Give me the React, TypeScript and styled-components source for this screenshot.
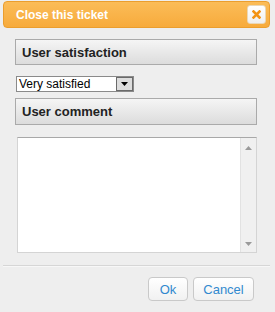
import React from "react";
import styled, { createGlobalStyle } from "styled-components";

const GlobalStyle = createGlobalStyle`
  html, body { margin: 0; padding: 0; background: #eeeeee; }
  * { box-sizing: border-box; }
`;

const Dialog = styled.div`
  width: 275px;
  height: 312px;
  background: #eeeeee;
  padding: 1px 5px 0 3px;
  font-family: "Liberation Sans", Arial, sans-serif;
  display: flex;
  flex-direction: column;
`;

const TitleBar = styled.div`
  height: 27px;
  border: 1px solid #eb9e2e;
  border-radius: 4px;
  background: linear-gradient(#fbbc58, #f7ab3c);
  display: flex;
  align-items: center;
  justify-content: space-between;
  padding: 0 3px 0 12px;
`;

const Title = styled.span`
  color: #ffffff;
  font-weight: bold;
  font-size: 12px;
`;

const CloseButton = styled.button`
  width: 19px;
  height: 19px;
  padding: 0;
  border: 1px solid #ead7b6;
  border-radius: 3px;
  background: linear-gradient(#ffffff, #efefef);
  display: flex;
  align-items: center;
  justify-content: center;
`;

const Body = styled.div`
  padding: 11px 13px 0 12px;
  display: flex;
  flex-direction: column;
`;

const SectionHeader = styled.div<{ $mt?: number; $h?: number }>`
  height: ${(p) => p.$h ?? 26}px;
  margin-top: ${(p) => p.$mt ?? 0}px;
  border: 1px solid #aaaaaa;
  background: linear-gradient(#f5f5f5, #dcdcdc);
  display: flex;
  align-items: center;
  padding-left: 6px;
  font-weight: bold;
  font-size: 13px;
  color: #222222;
`;

const SelectBox = styled.div`
  margin: 11px 0 0 1px;
  width: 118px;
  height: 16px;
  border: 1px solid #8a8a8a;
  background: #ffffff;
  display: flex;
  align-items: stretch;
  justify-content: space-between;
`;

const SelectText = styled.span`
  font-size: 12px;
  color: #000000;
  line-height: 14px;
  padding-left: 2px;
`;

const SelectArrow = styled.span`
  width: 17px;
  border: 1px solid #6a6a6a;
  background: #dddddd;
  display: flex;
  align-items: center;
  justify-content: center;
`;

const CommentArea = styled.div`
  margin: 12px 0 0 2px;
  height: 116px;
  border: 1px solid #d4d4d4;
  border-top-color: #a8a8a8;
  background: #ffffff;
  display: flex;
  justify-content: flex-end;
`;

const ScrollBar = styled.div`
  width: 16px;
  background: #f0f0f0;
  border-left: 1px solid #e2e2e2;
  display: flex;
  flex-direction: column;
  justify-content: space-between;
  align-items: center;
  padding: 8px 0 6px;
`;

const Separator = styled.div`
  margin-top: 12px;
  height: 1px;
  background: #d6d6d6;
  border-bottom: 1px solid #f7f7f7;
  box-sizing: content-box;
`;

const Footer = styled.div`
  display: flex;
  justify-content: flex-end;
  gap: 5px;
  padding: 10px 16px 0 0;
`;

const Button = styled.button<{ $w: number }>`
  width: ${(p) => p.$w}px;
  height: 24px;
  border: 1px solid #c9c9c9;
  border-radius: 4px;
  background: linear-gradient(#ffffff, #f1f1f1);
  color: #3189cf;
  font-family: "Liberation Sans", Arial, sans-serif;
  font-size: 13px;
  padding: 0;
`;

const Triangle = ({ up }: { up?: boolean }) => (
  <svg width="7" height="4" viewBox="0 0 7 4">
    {up ? (
      <polygon points="0,4 7,4 3.5,0" fill="#9a9a9a" />
    ) : (
      <polygon points="0,0 7,0 3.5,4" fill="#9a9a9a" />
    )}
  </svg>
);

export default function App() {
  return (
    <>
      <GlobalStyle />
      <Dialog>
        <TitleBar>
          <Title>Close this ticket</Title>
          <CloseButton aria-label="Close">
            <svg width="9" height="9" viewBox="0 0 9 9">
              <path d="M1.5 1.5 L7.5 7.5 M7.5 1.5 L1.5 7.5" stroke="#f39314" strokeWidth="2.6" strokeLinecap="square" />
            </svg>
          </CloseButton>
        </TitleBar>
        <Body>
          <SectionHeader>User satisfaction</SectionHeader>
          <SelectBox>
            <SelectText>Very satisfied</SelectText>
            <SelectArrow>
              <svg width="7" height="4" viewBox="0 0 7 4">
                <polygon points="0,0 7,0 3.5,4" fill="#000" />
              </svg>
            </SelectArrow>
          </SelectBox>
          <SectionHeader $mt={6} $h={27}>User comment</SectionHeader>
          <CommentArea>
            <ScrollBar>
              <Triangle up />
              <Triangle />
            </ScrollBar>
          </CommentArea>
        </Body>
        <Separator />
        <Footer>
          <Button $w={40}>Ok</Button>
          <Button $w={61}>Cancel</Button>
        </Footer>
      </Dialog>
    </>
  );
}
